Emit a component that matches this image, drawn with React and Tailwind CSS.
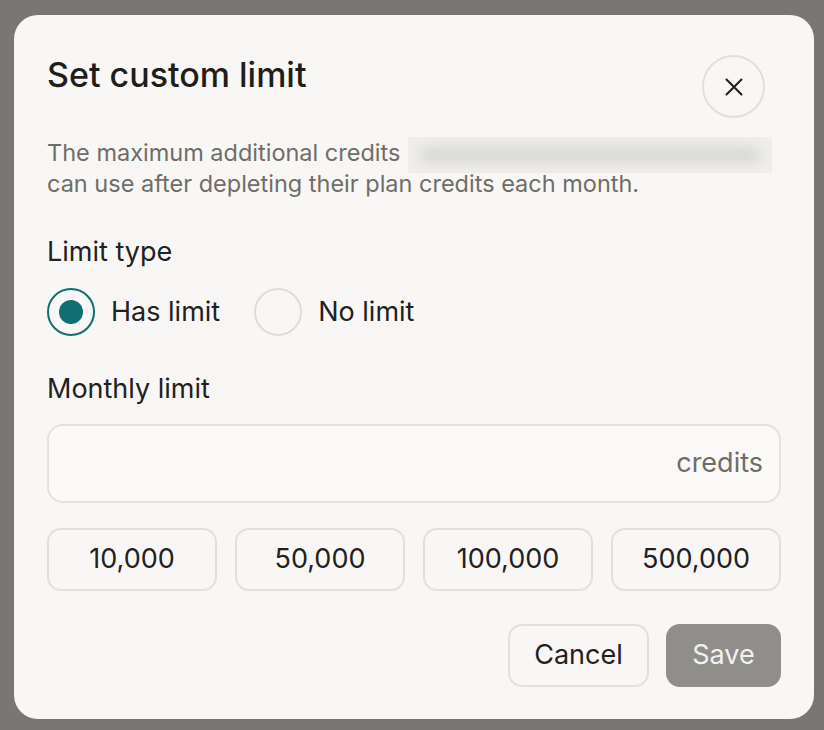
import { useState } from "react";

const presets = ["10,000", "50,000", "100,000", "500,000"];

function Radio({ checked, label, onClick }) {
  return (
    <button type="button" onClick={onClick} className="flex items-center gap-[16px]">
      <span
        className={
          checked
            ? "flex h-[48px] w-[48px] items-center justify-center rounded-full border-2 border-[#0f6f72]"
            : "flex h-[48px] w-[48px] items-center justify-center rounded-full border-2 border-[#e0ddd6]"
        }
      >
        {checked && <span className="h-[24px] w-[24px] rounded-full bg-[#0f6f72]" />}
      </span>
      <span className="text-[27px] leading-[32px] text-[#22211e]">{label}</span>
    </button>
  );
}

export default function App() {
  const [hasLimit, setHasLimit] = useState(true);
  const [amount, setAmount] = useState("");

  return (
    <div
      className="flex h-[730px] w-[824px] items-start bg-[#787775] pt-[15px] pl-[14px]"
      style={{ fontFamily: "Inter, 'Noto Sans', sans-serif" }}
    >
      <div className="w-[800px] rounded-[24px] bg-[#f8f7f5] px-[33px] pt-[40px] pb-[32px]">
        {/* header */}
        <div className="flex items-start justify-between">
          <h2 className="text-[34px] leading-[40px] font-medium text-[#1f1e1b]">
            Set custom limit
          </h2>
          <button
            type="button"
            className="mr-[16px] flex h-[63px] w-[63px] items-center justify-center rounded-full border-2 border-[#e3e0d9]"
          >
            <svg width="18" height="18" viewBox="0 0 18 18" fill="none" stroke="#1f1e1b" strokeWidth="2" strokeLinecap="round">
              <path d="M1.5 1.5l15 15M16.5 1.5l-15 15" />
            </svg>
          </button>
        </div>

        <p className="mt-[20px] text-[23.5px] leading-[30px] text-[#6f6d68]">
          The maximum additional credits{" "}
          <span className="-my-[4px] ml-[1px] inline-block h-[36px] w-[364px] bg-[#efeeeb] align-middle">
            <span className="mx-[12px] mt-[10px] block h-[16px] rounded-full bg-[#d9d8d4] blur-[6px]" />
          </span>
          <br />
          can use after depleting their plan credits each month.
        </p>

        <div className="mt-[37px] text-[27px] leading-[32px] text-[#22211e]">Limit type</div>
        <div className="mt-[20px] flex items-center gap-[34px]">
          <Radio checked={hasLimit} label="Has limit" onClick={() => setHasLimit(true)} />
          <Radio checked={!hasLimit} label="No limit" onClick={() => setHasLimit(false)} />
        </div>

        <div className="mt-[37px] text-[27px] leading-[32px] text-[#22211e]">Monthly limit</div>
        <div className="mt-[19px] flex h-[79px] items-center rounded-[16px] border-2 border-[#e5e1dc] bg-[#fbfaf9] px-[16px]">
          <input
            value={amount}
            onChange={(e) => setAmount(e.target.value)}
            className="min-w-0 flex-1 bg-transparent text-[27px] text-[#1f1e1b] outline-none"
          />
          <span className="text-[27px] text-[#6f6d68]">credits</span>
        </div>

        <div className="mt-[25px] grid grid-cols-4 gap-[18px]">
          {presets.map((p) => (
            <button
              key={p}
              type="button"
              onClick={() => setAmount(p)}
              className="h-[63px] rounded-[14px] border-2 border-[#e3e0d9] text-[27px] text-[#22211e]"
            >
              {p}
            </button>
          ))}
        </div>

        <div className="mt-[33px] flex justify-end gap-[17px]">
          <button
            type="button"
            className="h-[63px] w-[141px] rounded-[14px] border-2 border-[#e3e0d9] text-[27px] text-[#22211e]"
          >
            Cancel
          </button>
          <button
            type="button"
            className="h-[63px] w-[115px] rounded-[14px] bg-[#8f8e8a] text-[27px] text-[#f3f2ef]"
          >
            Save
          </button>
        </div>
      </div>
    </div>
  );
}
